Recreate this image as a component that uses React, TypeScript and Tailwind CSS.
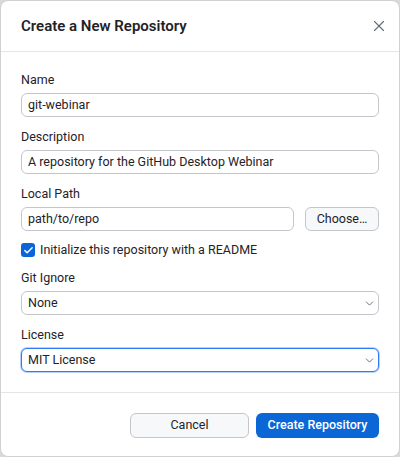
import { Check, ChevronDown, X } from "lucide-react";

const LABEL = "h-4 text-[12.5px] leading-4 text-[#1f2328]";
const INPUT =
  "h-6 w-full rounded-[6px] border border-[#c3c6ca] bg-white px-[6px] text-[12.5px] leading-[22px] text-[#1f2328]";

function Field({ label, children }: { label: string; children: React.ReactNode }) {
  return (
    <div className="flex flex-col gap-[5px]">
      <div className={LABEL}>{label}</div>
      {children}
    </div>
  );
}

function Select({ value, focused }: { value: string; focused?: boolean }) {
  return (
    <div
      className={
        "flex h-6 w-full items-center justify-between rounded-[6px] bg-white pl-[6px] pr-[2px] text-[12.5px] text-[#1f2328] " +
        (focused ? "border border-[#2f7cf6] shadow-[0_0_0_1px_rgba(47,124,246,0.35)]" : "border border-[#c3c6ca]")
      }
    >
      <span>{value}</span>
      <ChevronDown size={13} strokeWidth={1.6} className="text-[#57606a]" />
    </div>
  );
}

export default function App() {
  return (
    <div className="h-[457px] w-[400px] bg-[#d9d9d9] font-['Roboto',sans-serif]">
      <div className="flex h-full w-full flex-col overflow-hidden rounded-[8px] border border-[#d0d0d0] bg-white">
        {/* header */}
        <div className="flex h-[51px] flex-none items-center justify-between border-b border-[#e4e6e8] pl-5 pr-[11px]">
          <div className="text-[15px] font-semibold text-[#1f2328]">Create a New Repository</div>
          <X size={18} strokeWidth={1.5} className="text-[#656d76]" />
        </div>

        {/* body */}
        <div className="flex flex-none flex-col gap-3 border-b border-[#e4e6e8] px-5 pb-5 pt-5">
          <Field label="Name">
            <div className={INPUT}>git-webinar</div>
          </Field>
          <Field label="Description">
            <div className={INPUT}>A repository for the GitHub Desktop Webinar</div>
          </Field>
          <Field label="Local Path">
            <div className="flex gap-[11px]">
              <div className={INPUT + " flex-1"}>path/to/repo</div>
              <button
                type="button"
                className="h-6 w-[74px] flex-none rounded-[6px] border border-[#c3c6ca] bg-[#f6f8fa] text-[12.5px] text-[#1f2328]"
              >
                Choose…
              </button>
            </div>
          </Field>
          <label className="-mt-px flex h-4 items-center gap-[5px] text-[12.5px] text-[#1f2328]">
            <span className="flex h-[14px] w-[14px] items-center justify-center rounded-[3px] bg-[#0a66d8]">
              <Check size={11} strokeWidth={3.2} className="text-white" />
            </span>
            Initialize this repository with a README
          </label>
          <Field label="Git Ignore">
            <Select value="None" />
          </Field>
          <Field label="License">
            <Select value="MIT License" focused />
          </Field>
        </div>

        {/* footer */}
        <div className="flex flex-1 items-start justify-end gap-[7px] px-5 pt-5">
          <button
            type="button"
            className="h-[25px] w-[119px] rounded-[6px] border border-[#c3c6ca] bg-[#f6f8fa] text-[12.5px] text-[#1f2328]"
          >
            Cancel
          </button>
          <button
            type="button"
            className="h-[25px] w-[123px] rounded-[6px] bg-[#0b66d6] text-[12.5px] font-medium text-white"
          >
            Create Repository
          </button>
        </div>
      </div>
    </div>
  );
}
